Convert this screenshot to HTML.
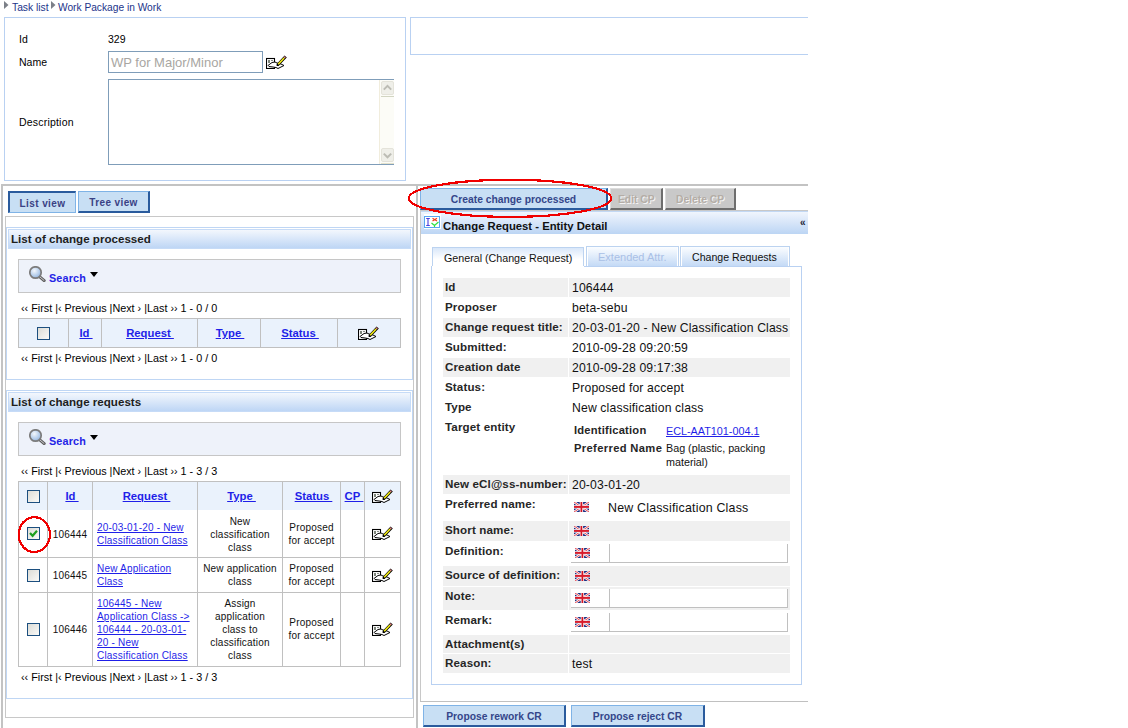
<!DOCTYPE html>
<html><head><meta charset="utf-8">
<style>
*{box-sizing:border-box}
html,body{margin:0;padding:0;background:#fff;width:1128px;height:728px;overflow:hidden;font-family:"Liberation Sans",sans-serif;color:#000}
.a{position:absolute}
.t{position:absolute;white-space:nowrap;line-height:1}
.lb{position:absolute;border:1px solid #b9d1f2}
.btn{position:absolute;background:#c8dff4;border-style:solid;border-color:#7fb3e6 #2a5b9d #2a5b9d #7fb3e6;border-width:1px 2px 2px 1px;color:#34468a;font-weight:bold;font-size:10.3px;text-align:center;line-height:1}
.btnp{border-color:#2a5b9d #7fb3e6 #7fb3e6 #2a5b9d;border-width:2px 1px 1px 2px}
.gbtn{position:absolute;background:#c9c9c9;border-style:solid;border-color:#dcdcdc #6e6e6e #6e6e6e #dcdcdc;border-width:1px 2px 2px 1px;color:#b4ada6;font-weight:bold;font-size:10.3px;text-shadow:1px 1px 0 #f4f4f4;line-height:1}
.hdr{position:absolute;border:1px solid #c6dbf7;background:linear-gradient(#f3f7fd,#bed6f5)}
.sbox{position:absolute;border:1px solid #c6c6c6;background:#eef2fa}
.pg{position:absolute;white-space:nowrap;line-height:1;font-size:10.8px;color:#000}
.lnk{color:#1f1fe8;text-decoration:underline}
.cb{position:absolute;width:13px;height:13px;border:1px solid #1c4f7f;background:linear-gradient(135deg,#dcdcd6,#fafaf8)}
.vl{position:absolute;width:1px;background:#c0c0c0}
.hl{position:absolute;height:1px;background:#c0c0c0}
.gr{position:absolute;background:#f0f0f0}
.lab{position:absolute;white-space:nowrap;line-height:1;font-weight:bold;font-size:11.6px;letter-spacing:0.12px;color:#262626}
.val{position:absolute;white-space:nowrap;line-height:1;font-size:12.2px;letter-spacing:0.15px;color:#111}
.cell{position:absolute;white-space:nowrap;line-height:13px;font-size:10px;letter-spacing:0.2px;text-align:center;color:#111}
.cell.lnk{color:#1f1fe8}
</style></head><body>
<svg width="0" height="0" style="position:absolute">
<defs>
<symbol id="edit" viewBox="0 0 21 14">
<rect x="0.5" y="3.5" width="8" height="10" fill="#fff" stroke="#000" stroke-width="1.1"/>
<rect x="2" y="5" width="2" height="3" fill="#7d857a"/><rect x="5" y="5" width="2" height="1" fill="#8a9088"/>
<path d="M2 10.5 L4 9 L6 7.5 L9 7 L11 8 L15 9 L18 10.5 L16 11.5 L14 12.5 L12 13.5 L10 12.5 L7 12 L3 11.5 Z" fill="#fff" stroke="#000" stroke-width="1"/>
<path d="M10.6 11 L10.6 9 L18.6 0.4 L20.8 2.5 L12.6 11 Z" fill="#000"/>
<path d="M12.2 9.2 L18.1 3.0" stroke="#f6ef12" stroke-width="1.6"/>
<path d="M18.2 2.8 L19.3 1.7" stroke="#f49090" stroke-width="1.5"/>
</symbol>
<symbol id="mag" viewBox="0 0 17 16">
<defs><radialGradient id="lg" cx="0.4" cy="0.35" r="0.7"><stop offset="0" stop-color="#f4f8fc"/><stop offset="0.6" stop-color="#b7cfec"/><stop offset="1" stop-color="#8fb0d8"/></radialGradient></defs>
<path d="M10.8 10.8 L15.2 14.6" stroke="#5e5e5e" stroke-width="3" stroke-linecap="round"/>
<path d="M11 11 L15 14.4" stroke="#cfcfcf" stroke-width="1" stroke-linecap="round"/>
<circle cx="6.5" cy="6.5" r="5.7" fill="url(#lg)" stroke="#7c7c7c" stroke-width="1.7"/>
</symbol>
<symbol id="flag" viewBox="0 0 15 10">
<rect width="15" height="10" fill="#1a2d82"/>
<path d="M0 0L15 10M15 0L0 10" stroke="#fff" stroke-width="2.3"/>
<path d="M0 0L15 10M15 0L0 10" stroke="#e0303c" stroke-width="0.9"/>
<rect x="5.7" y="0" width="3.4" height="10" fill="#fff"/>
<rect x="0" y="3.2" width="15" height="3.4" fill="#fff"/>
<rect x="6.5" y="0" width="1.8" height="10" fill="#d01424"/>
<rect x="0" y="3.9" width="15" height="2" fill="#d81c2c"/>
</symbol>
</defs></svg>
<svg class="a" style="left:4px;top:1px" width="5" height="8"><path d="M0 0L4.5 4L0 8Z" fill="#7c8088"/></svg>
<div class="t" style="left:12px;top:3px;font-size:10.3px;color:#22348a">Task list</div>
<svg class="a" style="left:51px;top:1px" width="5" height="8"><path d="M0 0L4.5 4L0 8Z" fill="#7c8088"/></svg>
<div class="t" style="left:58px;top:3px;font-size:10.2px;color:#22348a">Work Package in Work</div>
<div class="a" style="left:4px;top:17px;width:402px;height:164px;border:1px solid #b9d1f2"></div>
<div class="t" style="left:19px;top:34px;font-size:10.5px">Id</div>
<div class="t" style="left:108px;top:34px;font-size:10.5px">329</div>
<div class="t" style="left:19px;top:57px;font-size:10.5px">Name</div>
<div class="t" style="left:19px;top:117px;font-size:10.5px;letter-spacing:0.2px">Description</div>
<div class="a" style="left:108px;top:51px;width:155px;height:22px;border:1px solid #7f9db9"></div>
<div class="t" style="left:111px;top:56px;font-size:13px;color:#a8a6a2">WP for Major/Minor</div>
<svg class="a" style="left:266px;top:55px" width="21" height="14"><use href="#edit" width="21" height="14"/></svg>
<div class="a" style="left:108px;top:79px;width:286px;height:86px;border:1px solid #7f9db9;border-right:none"></div>
<div class="a" style="left:379px;top:80px;width:15px;height:84px;background:#fcfcf7;border-left:1px solid #f1eddd"></div>
<div class="a" style="left:381px;top:81px;width:13px;height:14px;background:#efefe9;border:1px solid #e4e3da;border-radius:2px"></div>
<div class="a" style="left:381px;top:96px;width:13px;height:1px;background:#d2d5c2"></div>
<svg class="a" style="left:381px;top:81px" width="13" height="14"><path d="M2.8 8.6L6.5 4.9L10.2 8.6" stroke="#bcbcb4" stroke-width="2" fill="none"/></svg>
<div class="a" style="left:381px;top:148px;width:13px;height:14px;background:#efefe9;border:1px solid #e4e3da;border-radius:2px"></div>
<div class="a" style="left:381px;top:163px;width:13px;height:1px;background:#e4e2cc"></div>
<svg class="a" style="left:381px;top:148px" width="13" height="14"><path d="M2.8 5.6L6.5 9.3L10.2 5.6" stroke="#bcbcb4" stroke-width="2" fill="none"/></svg>
<div class="a" style="left:410px;top:17px;width:398px;height:38px;border:1px solid #b9d1f2;border-right:none"></div>
<div class="a" style="left:1px;top:184px;width:807px;height:2px;background:#c3c3c3"></div>
<div class="a" style="left:1px;top:184px;width:2px;height:544px;background:#c3c3c3"></div>
<div class="a" style="left:416px;top:184px;width:2px;height:544px;background:#c3c3c3"></div>
<div class="btn btnp" style="left:8px;top:191px;width:68px;height:22px;padding-top:6px;font-size:10px;letter-spacing:0.4px;color:#3a4285">List view</div>
<div class="btn" style="left:78px;top:191px;width:72px;height:22px;padding-top:6px;font-size:10px;letter-spacing:0.4px;color:#3a4285">Tree view</div>
<div class="a" style="left:5px;top:216px;width:409px;height:502px;border:1px solid #c8c8c8"></div>
<div class="a" style="left:6px;top:227px;width:407px;height:153px;border:1px solid #bfd6f4"></div>
<div class="hdr" style="left:8px;top:229px;width:403px;height:20px"></div>
<div class="t" style="left:11px;top:233px;font-size:11.6px;font-weight:bold;color:#1e1e1e">List of change processed</div>
<div class="sbox" style="left:18px;top:259px;width:383px;height:34px"></div>
<svg class="a" style="left:29px;top:266px" width="17" height="16"><use href="#mag" width="17" height="16"/></svg>
<div class="t" style="left:49px;top:273px;font-size:10.8px;font-weight:bold;color:#2424e6;letter-spacing:0.15px">Search</div>
<svg class="a" style="left:90px;top:272px" width="8" height="5"><path d="M0 0H8L4 5Z" fill="#000"/></svg>
<div class="pg" style="left:21px;top:303px;">&lsaquo;&lsaquo; First |&lsaquo; Previous |Next &rsaquo; |Last &rsaquo;&rsaquo; 1 - 0 / 0</div>
<div class="a" style="left:18px;top:318px;width:383px;height:30px;background:#eaf2fc;border:1px solid #c0c0c0"></div>
<div class="vl" style="left:68px;top:318px;height:30px"></div>
<div class="vl" style="left:101px;top:318px;height:30px"></div>
<div class="vl" style="left:197px;top:318px;height:30px"></div>
<div class="vl" style="left:260px;top:318px;height:30px"></div>
<div class="vl" style="left:337px;top:318px;height:30px"></div>
<div class="cb" style="left:37px;top:327px"></div>
<div class="t lnk" style="left:26px;width:120px;text-align:center;top:328px;font-size:11.3px;font-weight:bold">Id&nbsp;</div>
<div class="t lnk" style="left:90px;width:120px;text-align:center;top:328px;font-size:11.3px;font-weight:bold">Request&nbsp;</div>
<div class="t lnk" style="left:170px;width:120px;text-align:center;top:328px;font-size:11.3px;font-weight:bold">Type&nbsp;</div>
<div class="t lnk" style="left:240px;width:120px;text-align:center;top:328px;font-size:11.3px;font-weight:bold">Status&nbsp;</div>
<svg class="a" style="left:358px;top:326px" width="21" height="14"><use href="#edit" width="21" height="14"/></svg>
<div class="pg" style="left:21px;top:353px;">&lsaquo;&lsaquo; First |&lsaquo; Previous |Next &rsaquo; |Last &rsaquo;&rsaquo; 1 - 0 / 0</div>
<div class="a" style="left:6px;top:390px;width:407px;height:309px;border:1px solid #bfd6f4"></div>
<div class="hdr" style="left:8px;top:392px;width:403px;height:20px"></div>
<div class="t" style="left:11px;top:396px;font-size:11.6px;font-weight:bold;color:#1e1e1e">List of change requests</div>
<div class="sbox" style="left:18px;top:422px;width:383px;height:34px"></div>
<svg class="a" style="left:29px;top:429px" width="17" height="16"><use href="#mag" width="17" height="16"/></svg>
<div class="t" style="left:49px;top:436px;font-size:10.8px;font-weight:bold;color:#2424e6;letter-spacing:0.15px">Search</div>
<svg class="a" style="left:90px;top:435px" width="8" height="5"><path d="M0 0H8L4 5Z" fill="#000"/></svg>
<div class="pg" style="left:21px;top:466px;">&lsaquo;&lsaquo; First |&lsaquo; Previous |Next &rsaquo; |Last &rsaquo;&rsaquo; 1 - 3 / 3</div>
<div class="a" style="left:18px;top:481px;width:383px;height:186px;border:1px solid #c0c0c0"></div>
<div class="a" style="left:19px;top:482px;width:381px;height:28px;background:#eaf2fc"></div>
<div class="hl" style="left:18px;top:557px;width:383px"></div>
<div class="hl" style="left:18px;top:592px;width:383px"></div>
<div class="vl" style="left:47px;top:481px;height:186px"></div>
<div class="vl" style="left:92px;top:481px;height:186px"></div>
<div class="vl" style="left:197px;top:481px;height:186px"></div>
<div class="vl" style="left:282px;top:481px;height:186px"></div>
<div class="vl" style="left:340px;top:481px;height:186px"></div>
<div class="vl" style="left:364px;top:481px;height:186px"></div>
<div class="cb" style="left:27px;top:490px"></div>
<div class="t lnk" style="left:12px;width:120px;text-align:center;top:491px;font-size:11.3px;font-weight:bold">Id&nbsp;</div>
<div class="t lnk" style="left:86.5px;width:120px;text-align:center;top:491px;font-size:11.3px;font-weight:bold">Request&nbsp;</div>
<div class="t lnk" style="left:181.5px;width:120px;text-align:center;top:491px;font-size:11.3px;font-weight:bold">Type&nbsp;</div>
<div class="t lnk" style="left:253.5px;width:120px;text-align:center;top:491px;font-size:11.3px;font-weight:bold">Status&nbsp;</div>
<div class="t lnk" style="left:294px;width:120px;text-align:center;top:491px;font-size:11.3px;font-weight:bold">CP&nbsp;</div>
<svg class="a" style="left:372px;top:489px" width="21" height="14"><use href="#edit" width="21" height="14"/></svg>
<div class="cb" style="left:27px;top:527px"></div>
<svg class="a" style="left:27px;top:527px" width="13" height="13"><path d="M3 6 L5.6 8.8 L10 3.8" stroke="#1e9e1e" stroke-width="2.2" fill="none"/></svg>
<div class="cell" style="left:48px;width:44px;top:527.6px">106444</div>
<div class="cell lnk" style="left:97px;text-align:left;top:520.8px">20-03-01-20 - New<br>Classification Class</div>
<div class="cell" style="left:198px;width:84px;top:514.6px">New<br>classification<br>class</div>
<div class="cell" style="left:283px;width:57px;top:520.5px">Proposed<br>for accept</div>
<svg class="a" style="left:372px;top:526px" width="21" height="14"><use href="#edit" width="21" height="14"/></svg>
<div class="cb" style="left:27px;top:569px"></div>
<div class="cell" style="left:48px;width:44px;top:568.6px">106445</div>
<div class="cell lnk" style="left:97px;text-align:left;top:561.8px">New Application<br>Class</div>
<div class="cell" style="left:198px;width:84px;top:562.1px">New application<br>class</div>
<div class="cell" style="left:283px;width:57px;top:561.5px">Proposed<br>for accept</div>
<svg class="a" style="left:372px;top:568px" width="21" height="14"><use href="#edit" width="21" height="14"/></svg>
<div class="cb" style="left:27px;top:623px"></div>
<div class="cell" style="left:48px;width:44px;top:623.1px">106446</div>
<div class="cell lnk" style="left:97px;text-align:left;top:596.8px">106445 - New<br>Application Class -&gt;<br>106444 - 20-03-01-<br>20 - New<br>Classification Class</div>
<div class="cell" style="left:198px;width:84px;top:597.1px">Assign<br>application<br>class to<br>classification<br>class</div>
<div class="cell" style="left:283px;width:57px;top:616.0px">Proposed<br>for accept</div>
<svg class="a" style="left:372px;top:622px" width="21" height="14"><use href="#edit" width="21" height="14"/></svg>
<div class="pg" style="left:21px;top:672px;">&lsaquo;&lsaquo; First |&lsaquo; Previous |Next &rsaquo; |Last &rsaquo;&rsaquo; 1 - 3 / 3</div>
<div class="btn" style="left:420px;top:188px;width:188px;height:22px;padding-top:6px">Create change processed</div>
<div class="gbtn" style="left:610px;top:188px;width:53px;height:22px;padding:6px 0 0 7px">Edit CP</div>
<div class="gbtn" style="left:665px;top:188px;width:71px;height:22px;padding:6px 0 0 10px">Delete CP</div>
<div class="a" style="left:420px;top:210px;width:388px;height:492px;border:1px solid #c8c8c8;border-right:none"></div>
<div class="a" style="left:421px;top:211px;width:387px;height:23px;border-top:1px solid #c2d8f4;background:linear-gradient(#f0f5fd,#bcd5f4)"></div>
<svg class="a" style="left:424px;top:214px" width="17" height="15" viewBox="0 0 17 15">
<rect x="0" y="0" width="17" height="15" fill="#fff"/>
<rect x="0.5" y="2.5" width="15" height="11" fill="#fff" stroke="#5aa6f0"/>
<path d="M2.2 4.5H5.8M4 4.5V11.5M2.2 11.5H5.8" stroke="#4a3ee0" stroke-width="1.1"/>
<path d="M8.5 4.2L13 7M13 4.2L8.5 7" stroke="#f04020" stroke-width="1.2"/>
<path d="M7.5 9L10.5 11.5L14.5 8M10.5 11.5V13" stroke="#30e040" stroke-width="1.2" fill="none"/>
</svg>
<div class="t" style="left:443px;top:221px;font-size:11.3px;font-weight:bold;color:#111">Change Request - Entity Detail</div>
<div class="t" style="left:800px;top:218px;font-size:10px;font-weight:bold;color:#223">&laquo;</div>
<div class="a" style="left:432px;top:247px;width:152px;height:20px;border:1px solid #bcd3f0;border-bottom:none;background:linear-gradient(#d9e7f9,#fff 60%)"></div>
<div class="t" style="left:444px;top:253px;font-size:10.7px;color:#111">General (Change Request)</div>
<div class="a" style="left:586px;top:246px;width:93px;height:20px;border:1px solid #bcd3f0;border-bottom:none;box-shadow:inset 1px 0 #fff,inset -1px 0 #fff;background:linear-gradient(#fbfdff,#c4daf6)"></div>
<div class="t" style="left:598px;top:252px;font-size:11px;color:#a9c0e6">Extended Attr.</div>
<div class="a" style="left:680px;top:246px;width:110px;height:20px;border:1px solid #bcd3f0;border-bottom:none;box-shadow:inset 1px 0 #fff,inset -1px 0 #fff;background:linear-gradient(#fbfdff,#c4daf6)"></div>
<div class="t" style="left:692px;top:252px;font-size:10.6px;color:#111">Change Requests</div>
<div class="a" style="left:431px;top:266px;width:371px;height:419px;border:1px solid #b9d1f2"></div>
<div class="a" style="left:432px;top:266px;width:152px;height:1px;background:#fff"></div>
<div class="a" style="left:443px;top:278px;width:125px;height:19px;background:#f0f0f0"></div>
<div class="a" style="left:569px;top:278px;width:221px;height:19px;background:#f0f0f0"></div>
<div class="lab" style="left:445px;top:281px;">Id</div>
<div class="val" style="left:572px;top:282px;">106444</div>
<div class="lab" style="left:445px;top:301px;">Proposer</div>
<div class="val" style="left:572px;top:302px;">beta-sebu</div>
<div class="a" style="left:443px;top:318px;width:125px;height:19px;background:#f0f0f0"></div>
<div class="a" style="left:569px;top:318px;width:221px;height:19px;background:#f0f0f0"></div>
<div class="lab" style="left:445px;top:321px;">Change request title:</div>
<div class="val" style="left:572px;top:322px;">20-03-01-20 - New Classification Class</div>
<div class="lab" style="left:445px;top:341px;">Submitted:</div>
<div class="val" style="left:572px;top:342px;">2010-09-28 09:20:59</div>
<div class="a" style="left:443px;top:358px;width:125px;height:19px;background:#f0f0f0"></div>
<div class="a" style="left:569px;top:358px;width:221px;height:19px;background:#f0f0f0"></div>
<div class="lab" style="left:445px;top:361px;">Creation date</div>
<div class="val" style="left:572px;top:362px;">2010-09-28 09:17:38</div>
<div class="lab" style="left:445px;top:381px;">Status:</div>
<div class="val" style="left:572px;top:382px;">Proposed for accept</div>
<div class="lab" style="left:445px;top:401px;">Type</div>
<div class="val" style="left:572px;top:402px;">New classification class</div>
<div class="lab" style="left:445px;top:421px;">Target entity</div>
<div class="a" style="left:443px;top:475px;width:125px;height:19px;background:#f0f0f0"></div>
<div class="a" style="left:569px;top:475px;width:221px;height:19px;background:#f0f0f0"></div>
<div class="lab" style="left:445px;top:478px;">New eCl@ss-number:</div>
<div class="val" style="left:572px;top:479px;">20-03-01-20</div>
<div class="lab" style="left:445px;top:498px;">Preferred name:</div>
<div class="a" style="left:443px;top:521px;width:125px;height:20px;background:#f0f0f0"></div>
<div class="a" style="left:569px;top:521px;width:221px;height:20px;background:#f0f0f0"></div>
<div class="lab" style="left:445px;top:524px;">Short name:</div>
<div class="lab" style="left:445px;top:545px;">Definition:</div>
<div class="a" style="left:443px;top:566px;width:125px;height:20px;background:#f0f0f0"></div>
<div class="a" style="left:569px;top:566px;width:221px;height:20px;background:#f0f0f0"></div>
<div class="lab" style="left:445px;top:569px;">Source of definition:</div>
<div class="a" style="left:443px;top:587px;width:125px;height:23px;background:#f0f0f0"></div>
<div class="a" style="left:569px;top:587px;width:221px;height:23px;background:#f0f0f0"></div>
<div class="lab" style="left:445px;top:590px;">Note:</div>
<div class="lab" style="left:445px;top:614px;">Remark:</div>
<div class="a" style="left:443px;top:635px;width:125px;height:18px;background:#f0f0f0"></div>
<div class="a" style="left:569px;top:635px;width:221px;height:18px;background:#f0f0f0"></div>
<div class="lab" style="left:445px;top:638px;">Attachment(s)</div>
<div class="a" style="left:443px;top:654px;width:125px;height:19px;background:#f0f0f0"></div>
<div class="a" style="left:569px;top:654px;width:221px;height:19px;background:#f0f0f0"></div>
<div class="lab" style="left:445px;top:657px;">Reason:</div>
<div class="val" style="left:572px;top:658px;">test</div>
<div class="lab" style="left:574px;top:425px;font-size:11.2px;letter-spacing:0.2px">Identification</div>
<div class="t lnk" style="left:666px;top:425.5px;font-size:10.8px">ECL-AAT101-004.1</div>
<div class="lab" style="left:574px;top:443px;font-size:11.2px;letter-spacing:0.35px">Preferred Name</div>
<div class="t" style="left:666px;top:442px;font-size:10.75px;line-height:13.5px;color:#111">Bag (plastic, packing<br>material)</div>
<svg class="a" style="left:574px;top:502px" width="15" height="10"><use href="#flag" width="15" height="10"/></svg>
<div class="val" style="left:608px;top:502px;font-size:12.4px;letter-spacing:0.2px">New Classification Class</div>
<svg class="a" style="left:574px;top:526px" width="15" height="10"><use href="#flag" width="15" height="10"/></svg>
<div class="a" style="left:571px;top:544px;width:217px;height:19px;background:#fff"></div>
<div class="a" style="left:609px;top:544px;width:1px;height:18px;background:#c0c0c0"></div>
<div class="a" style="left:787px;top:544px;width:1px;height:18px;background:#c0c0c0"></div>
<div class="a" style="left:571px;top:562px;width:217px;height:1px;background:#c0c0c0"></div>
<div class="a" style="left:571px;top:589px;width:217px;height:19px;background:#fff"></div>
<div class="a" style="left:609px;top:589px;width:1px;height:18px;background:#c0c0c0"></div>
<div class="a" style="left:787px;top:589px;width:1px;height:18px;background:#c0c0c0"></div>
<div class="a" style="left:571px;top:607px;width:217px;height:1px;background:#c0c0c0"></div>
<div class="a" style="left:571px;top:613px;width:217px;height:19px;background:#fff"></div>
<div class="a" style="left:609px;top:613px;width:1px;height:18px;background:#c0c0c0"></div>
<div class="a" style="left:787px;top:613px;width:1px;height:18px;background:#c0c0c0"></div>
<div class="a" style="left:571px;top:631px;width:217px;height:1px;background:#c0c0c0"></div>
<svg class="a" style="left:575px;top:548px" width="15" height="10"><use href="#flag" width="15" height="10"/></svg>
<svg class="a" style="left:575px;top:571px" width="15" height="10"><use href="#flag" width="15" height="10"/></svg>
<svg class="a" style="left:575px;top:593px" width="15" height="10"><use href="#flag" width="15" height="10"/></svg>
<svg class="a" style="left:575px;top:617px" width="15" height="10"><use href="#flag" width="15" height="10"/></svg>
<div class="a" style="left:420px;top:701px;width:388px;height:1px;background:#c0c0c0"></div>
<div class="btn" style="left:423px;top:705px;width:143px;height:22px;padding-top:6px">Propose rework CR</div>
<div class="btn" style="left:571px;top:705px;width:134px;height:22px;padding-top:6px">Propose reject CR</div>
<svg class="a" style="left:0;top:0" width="808" height="728" shape-rendering="crispEdges"><ellipse cx="510" cy="198.3" rx="101.3" ry="18.6" fill="none" stroke="#f00000" stroke-width="2.2"/><ellipse cx="34.3" cy="534.6" rx="15.6" ry="17.4" fill="none" stroke="#f00000" stroke-width="2.2"/></svg>
</body></html>
